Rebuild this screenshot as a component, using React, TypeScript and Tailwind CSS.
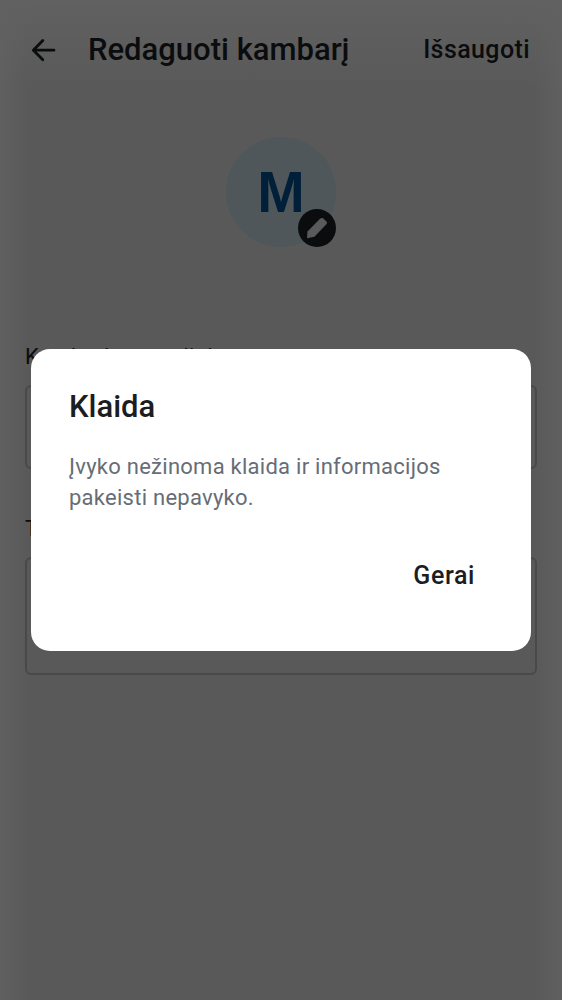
import React from "react";

function Header() {
  return (
    <header className="flex h-[100px] items-center pl-[31px] pr-[32px]">
      <svg className="h-[25px] w-[25px] shrink-0" viewBox="0 0 25 25" fill="none" stroke="#0b0c0e" strokeWidth="2.8" strokeLinecap="round" strokeLinejoin="round">
        <path d="M23 12.2H2.6M11.8 2.6L2.3 12.2L11.8 21.8" />
      </svg>
      <h1 className="ml-[32px] whitespace-nowrap text-[31px] font-medium leading-[40px]">Redaguoti kambarį</h1>
      <button className="ml-auto whitespace-nowrap text-[25px] font-medium leading-[32px] tracking-[0.4px]">Išsaugoti</button>
    </header>
  );
}

function Avatar() {
  return (
    <div className="relative mx-auto mt-[37px] flex h-[110px] w-[110px] items-center justify-center rounded-full bg-[#50575a] font-['Liberation_Sans',sans-serif] text-[57px] font-bold leading-none text-[#001f38]">
      M
      <div className="absolute bottom-0 right-0 flex h-[38px] w-[38px] items-center justify-center rounded-full bg-[#0b0c0e]">
        <svg className="h-[22px] w-[22px]" viewBox="0 0 22 22" fill="#5a5a5a">
          <path d="M1 21.2L1.5 14.6L14 1.8Q15.8.2 17.4 1.4L20.4 4.4Q21.7 5.8 20.6 7.1L8.4 19.7Z" />
        </svg>
      </div>
    </div>
  );
}

function Field({ label, tall }: { label: string; tall?: boolean }) {
  return (
    <label className="flex flex-col gap-[12px] text-[22px] leading-[32px]">
      <span className="tracking-[0.35px]">{label}</span>
      <span className={tall ? "h-[118px] rounded-[6px] border-2 border-[#48494c]" : "h-[84px] rounded-[6px] border-2 border-[#48494c]"} />
    </label>
  );
}

function ErrorDialog() {
  return (
    <div role="dialog" className="absolute left-[31px] top-[349px] flex h-[301.5px] w-[500px] flex-col rounded-[19px] bg-white px-[38px] pt-[38px] text-[#1b1d22]">
      <h2 className="text-[31px] font-medium leading-[40px]">Klaida</h2>
      <p className="mt-[24px] text-[22px] leading-[31px] tracking-[0.26px] text-[#656d77]">
        Įvyko nežinoma klaida ir informacijos
        <br />
        pakeisti nepavyko.
      </p>
      <button className="mr-[18px] mt-[47px] self-end text-[25px] font-medium leading-[32px] tracking-[0.6px]">Gerai</button>
    </div>
  );
}

export default function App() {
  return (
    <main className="relative h-[1000px] w-[562px] overflow-hidden bg-[#595959] bg-[linear-gradient(to_bottom,#616161,#61616100_90px),linear-gradient(to_right,#606060,#60606000_28px),linear-gradient(to_left,#606060,#60606000_28px)] font-['Roboto',sans-serif] text-[#0b0c0e]">
      <Header />
      <Avatar />
      <section className="mt-[93.5px] flex flex-col gap-[44px] px-[25px]">
        <Field label="Kambario pavadinimas" />
        <Field label="Tema" tall />
      </section>
      <ErrorDialog />
    </main>
  );
}
